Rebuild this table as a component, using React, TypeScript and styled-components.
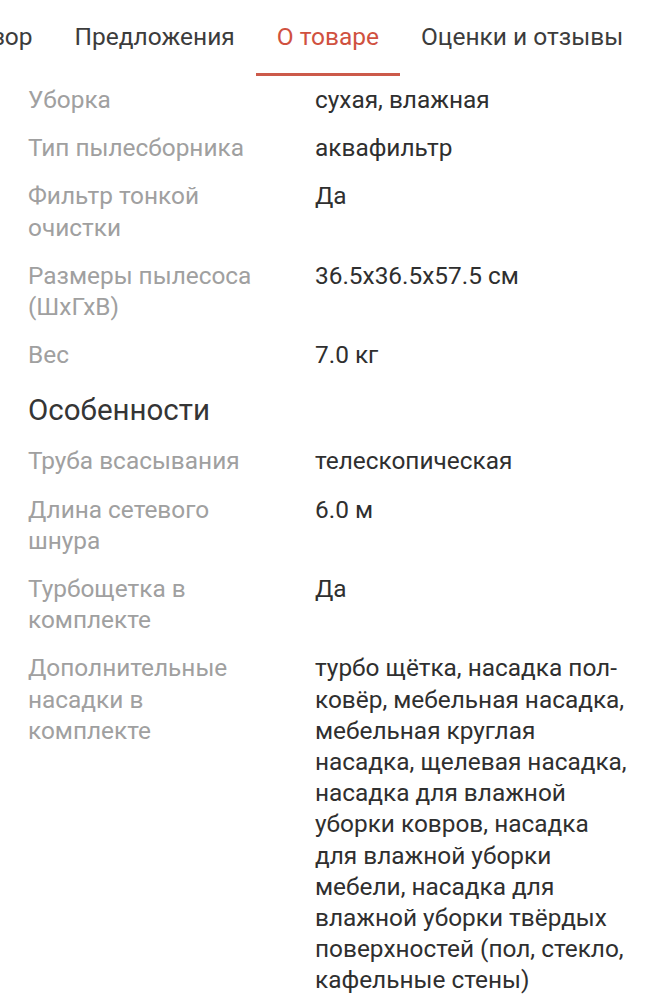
import React from "react";
import styled, { createGlobalStyle } from "styled-components";

const Global = createGlobalStyle`
  html, body { margin: 0; padding: 0; background: #ffffff; }
  body { font-family: Roboto, "Noto Sans", sans-serif; -webkit-font-smoothing: antialiased; }
`;

const Page = styled.div`
  width: 657px;
  overflow: hidden;
  background: #fff;
`;

const TabBar = styled.nav`
  height: 76px;
  overflow: hidden;
`;

const TabTrack = styled.div`
  display: flex;
  height: 100%;
  margin-left: -59px;
`;

const Tab = styled.div<{ $active?: boolean }>`
  flex: none;
  padding: 0 21px;
  height: 100%;
  display: flex;
  align-items: center;
  box-sizing: border-box;
  font-size: 24.5px;
  color: ${(p) => (p.$active ? "#d0513f" : "#3c3c3c")};
  border-bottom: 3px solid ${(p) => (p.$active ? "#cc5a4a" : "transparent")};
  white-space: nowrap;
`;

const Specs = styled.section`
  display: flex;
  flex-direction: column;
  padding: 0 26px 0 28px;
`;

const Row = styled.div`
  display: grid;
  grid-template-columns: 240px 1fr;
  column-gap: 47px;
  padding: 8px 0 9px;
  font-size: 24.4px;
  line-height: 31.2px;
`;

const Label = styled.div`
  color: #a0a0a0;
`;

const Value = styled.div`
  color: #2f2f2f;
`;

const Heading = styled.h3`
  margin: 14px 0 10px;
  font-weight: 400;
  font-size: 29.5px;
  line-height: 34px;
  color: #353535;
`;

const tabs = ["Обзор", "Предложения", "О товаре", "Оценки и отзывы"];

const general: [string, string][] = [
  ["Уборка", "сухая, влажная"],
  ["Тип пылесборника", "аквафильтр"],
  ["Фильтр тонкой очистки", "Да"],
  ["Размеры пылесоса (ШхГхВ)", "36.5x36.5x57.5 см"],
  ["Вес", "7.0 кг"],
];

const features: [string, string][] = [
  ["Труба всасывания", "телескопическая"],
  ["Длина сетевого шнура", "6.0 м"],
  ["Турбощетка в комплекте", "Да"],
  [
    "Дополнительные насадки в комплекте",
    "турбо щётка, насадка пол-ковёр, мебельная насадка, мебельная круглая насадка, щелевая насадка, насадка для влажной уборки ковров, насадка для влажной уборки мебели, насадка для влажной уборки твёрдых поверхностей (пол, стекло, кафельные стены)",
  ],
];

export default function App() {
  return (
    <Page>
      <Global />
      <TabBar>
        <TabTrack>
          {tabs.map((t) => (
            <Tab key={t} $active={t === "О товаре"}>
              {t}
            </Tab>
          ))}
        </TabTrack>
      </TabBar>
      <Specs>
        {general.map(([l, v]) => (
          <Row key={l}>
            <Label>{l}</Label>
            <Value>{v}</Value>
          </Row>
        ))}
        <Heading>Особенности</Heading>
        {features.map(([l, v]) => (
          <Row key={l}>
            <Label>{l}</Label>
            <Value>{v}</Value>
          </Row>
        ))}
      </Specs>
    </Page>
  );
}
